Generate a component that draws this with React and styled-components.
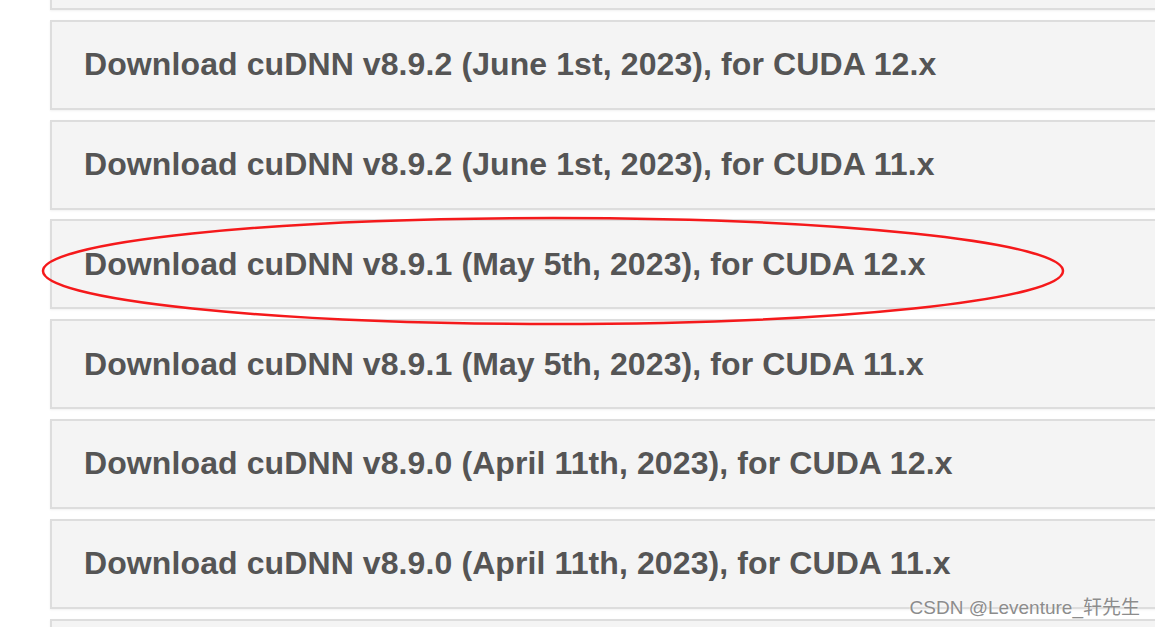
import styled, { createGlobalStyle } from "styled-components";

const GlobalStyle = createGlobalStyle`
    html, body {
        margin: 0;
        padding: 0;
        background: #ffffff;
    }
    body {
        width: 1155px;
        height: 627px;
        overflow: hidden;
        font-family: "Liberation Sans", Arial, sans-serif;
    }
`;

const Page = styled.div`
    position: relative;
    width: 1155px;
    height: 627px;
    overflow: hidden;
    padding-left: 50px;
    box-sizing: border-box;
`;

const List = styled.ul`
    list-style: none;
    margin: -80px 0 0 0;
    padding: 0;
    width: 1200px;
    display: flex;
    flex-direction: column;
    gap: 9.8px;
`;

const Row = styled.li`
    box-sizing: border-box;
    height: 90px;
    display: flex;
    align-items: center;
    padding: 0 0 0 32px;
    background: #f4f4f4;
    border: 2px solid #dddddd;
    box-shadow: 0 1px 2px rgba(0, 0, 0, 0.06);
`;

const Label = styled.a`
    color: #555555;
    font-size: 32px;
    font-weight: 700;
    letter-spacing: 0.1px;
    text-decoration: none;
    white-space: nowrap;
`;

const Mark = styled.svg`
    position: absolute;
    left: 40px;
    top: 214px;
    pointer-events: none;
`;

const Watermark = styled.div`
    position: absolute;
    right: 15px;
    bottom: 8px;
    font-family: "Liberation Sans", "Noto Sans CJK SC", sans-serif;
    font-size: 19px;
    color: #8c8c8c;
    text-shadow: 0 0 2px #ffffff;
`;

// null = row only partly in view, its label is off-screen
const releases = [
    null,
    "Download cuDNN v8.9.2 (June 1st, 2023), for CUDA 12.x",
    "Download cuDNN v8.9.2 (June 1st, 2023), for CUDA 11.x",
    "Download cuDNN v8.9.1 (May 5th, 2023), for CUDA 12.x",
    "Download cuDNN v8.9.1 (May 5th, 2023), for CUDA 11.x",
    "Download cuDNN v8.9.0 (April 11th, 2023), for CUDA 12.x",
    "Download cuDNN v8.9.0 (April 11th, 2023), for CUDA 11.x",
    null,
];

const App = () => {
    return (
        <>
            <GlobalStyle />
            <Page>
                <List>
                    {releases.map((text, i) => (
                        <Row key={i}>
                            {text && <Label href="#">{text}</Label>}
                        </Row>
                    ))}
                </List>
                {/* hand-drawn red circle around the 8.9.1 / CUDA 12 row */}
                <Mark width="1030" height="116" viewBox="0 0 1030 116">
                    <ellipse
                        cx="513"
                        cy="57"
                        rx="510"
                        ry="53"
                        fill="none"
                        stroke="#f5191b"
                        strokeWidth="2.5"
                    />
                </Mark>
                <Watermark>CSDN @Leventure_轩先生</Watermark>
            </Page>
        </>
    );
};

export default App;
